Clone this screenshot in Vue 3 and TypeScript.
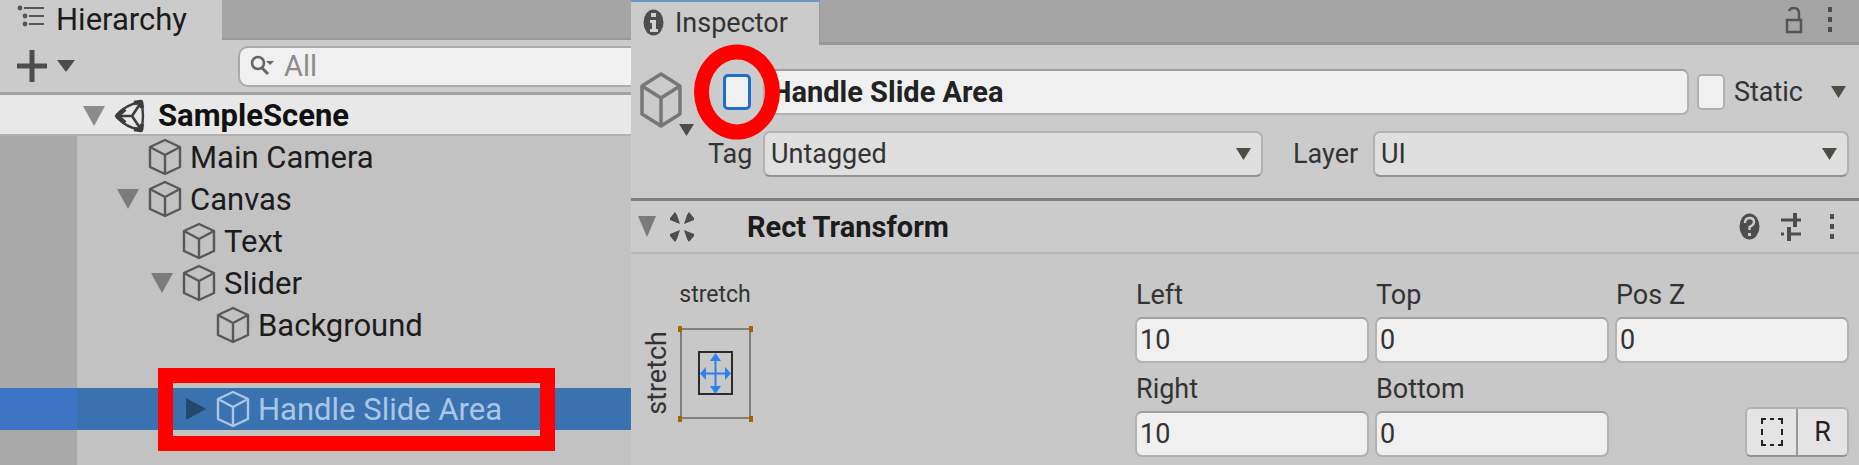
<script setup lang="ts">
import { ref } from 'vue'

interface TreeNode {
  name: string
  depth: number
  foldout?: 'open' | 'closed'
  selected?: boolean
  blank?: boolean
}

const nodes: TreeNode[] = [
  { name: 'Main Camera', depth: 1 },
  { name: 'Canvas', depth: 1, foldout: 'open' },
  { name: 'Text', depth: 2 },
  { name: 'Slider', depth: 2, foldout: 'open' },
  { name: 'Background', depth: 3 },
  { name: '', depth: 3, blank: true },
  { name: 'Handle Slide Area', depth: 3, foldout: 'closed', selected: true },
]

const search = ref('')
const objectName = ref('Handle Slide Area')
const active = ref(false)
const isStatic = ref(false)
const tag = ref('Untagged')
const layer = ref('UI')
const fields = ref([
  { id: 'left', label: 'Left', value: '10' },
  { id: 'top', label: 'Top', value: '0' },
  { id: 'posz', label: 'Pos Z', value: '0' },
  { id: 'right', label: 'Right', value: '10' },
  { id: 'bottom', label: 'Bottom', value: '0' },
])
</script>

<template>
  <main class="editor">
    <section class="hierarchy" aria-label="Hierarchy">
      <header class="tabbar">
        <h2 class="tab">
          <svg class="tab-icon" viewBox="0 0 28 24" aria-hidden="true">
            <g fill="none" stroke="#555" stroke-width="2">
              <path d="M7 4H27M12 12H27M12 20H27" />
            </g>
            <g fill="#555"><circle cx="3" cy="4" r="2.4" /><circle cx="8" cy="12" r="2.4" /><circle cx="8" cy="20" r="2.4" /></g>
          </svg>
          Hierarchy
        </h2>
      </header>

      <div class="toolbar">
        <button class="add" type="button" aria-label="Create">
          <svg width="30" height="32" viewBox="0 0 30 32"><path d="M15 0V32M0 16H30" stroke="#4d4d4d" stroke-width="5" /></svg>
          <svg width="18" height="12" viewBox="0 0 18 12"><path d="M0 0H18L9 12Z" fill="#4d4d45" /></svg>
        </button>
        <label class="search">
          <svg width="24" height="22" viewBox="0 0 24 22" aria-hidden="true">
            <circle cx="8" cy="8" r="6" fill="none" stroke="#666" stroke-width="2.6" />
            <path d="M12 13L18 19" stroke="#666" stroke-width="3" />
            <path d="M16 6H24L20 10Z" fill="#666" />
          </svg>
          <input v-model="search" type="text" placeholder="All" aria-label="Search" />
        </label>
      </div>

      <div class="scene">
        <svg class="fold" viewBox="0 0 24 24"><path d="M1 2H23L12 22Z" fill="#8c8c8c" /></svg>
        <svg class="scene-icon" viewBox="0 0 34 34" aria-hidden="true">
          <g fill="none" stroke="#3c3c3c" stroke-linejoin="round">
            <path d="M2 17Q12 5 27 3Q31 17 27 31Q12 29 2 17Z" stroke-width="2.400" />
            <path d="M3 17H18L26 5M18 17L26 29" stroke-width="2.600" />
            <path d="M3 17L11 10M3 17L11 24M20 4L27 3L28 9M20 30L27 31L28 25" stroke-width="4.500" />
          </g>
        </svg>
        <span>SampleScene</span>
      </div>

      <ul class="tree">
        <li
          v-for="node in nodes"
          :key="node.name"
          :class="['row', `depth-${node.depth}`, { selected: node.selected }]"
        >
          <span class="gutter"></span>
          <template v-if="!node.blank">
            <svg class="fold" viewBox="0 0 24 24" aria-hidden="true">
              <path v-if="node.foldout === 'open'" d="M1 2H23L12 22Z" fill="#7b7b7b" />
              <path v-if="node.foldout === 'closed'" d="M2 1L22 12L2 23Z" fill="#24476b" />
            </svg>
            <svg class="cube" viewBox="0 0 34 38" aria-hidden="true">
              <path d="M17 2L32 9V29L17 36L2 29V9ZM2 9L17 17L32 9M17 17V36" />
            </svg>
            <span>{{ node.name }}</span>
          </template>
          <span v-if="node.selected" class="mark-box"></span>
        </li>
      </ul>
    </section>

    <section class="inspector" aria-label="Inspector">
      <header class="tabbar">
        <h2 class="tab">
          <svg width="21" height="27" viewBox="0 0 21 27" aria-hidden="true">
            <ellipse cx="10.500" cy="13.500" rx="10" ry="13" fill="#4d4d4d" />
            <path d="M8 4H13V8H8ZM7 11H13V20H15V23H7V20H9V14H7Z" fill="#d0d0d0" />
          </svg>
          Inspector
        </h2>
        <div class="tab-tools">
          <button type="button" aria-label="Lock">
            <svg width="18" height="28" viewBox="0 0 18 28">
              <path d="M2 14H16V26H2Z" fill="none" stroke="#555" stroke-width="2.500" />
              <path d="M4 5Q5 2 9 2Q14 2 14 8V14" fill="none" stroke="#555" stroke-width="2.500" />
            </svg>
          </button>
          <button type="button" aria-label="Menu">
            <svg width="6" height="28" viewBox="0 0 6 28"><path d="M1 1H5V6H1ZM1 11H5V16H1ZM1 21H5V26H1Z" fill="#4d4d4d" /></svg>
          </button>
        </div>
      </header>

      <div class="object">
        <button class="object-icon" type="button" aria-label="Select icon">
          <svg width="42" height="56" viewBox="0 0 42 56">
            <path d="M21 2L40 14V42L21 54L2 42V14ZM2 14L21 26L40 14M21 26V54" fill="none" stroke="#777" stroke-width="3.500" stroke-linejoin="round" />
          </svg>
          <svg class="object-arrow" width="15" height="12" viewBox="0 0 15 12"><path d="M0 0H15L7.500 12Z" fill="#4d4d45" /></svg>
        </button>
        <div class="object-rows">
          <div class="object-row">
            <span class="active-cell">
              <input v-model="active" class="check focus" type="checkbox" aria-label="Active" />
              <span class="mark-ring"></span>
            </span>
            <input v-model="objectName" class="field name" type="text" aria-label="Name" />
            <label class="static"><input v-model="isStatic" class="check" type="checkbox" />Static</label>
            <button class="static-menu" type="button" aria-label="Static options">
              <svg width="15" height="12" viewBox="0 0 15 12"><path d="M0 0H15L7.500 12Z" fill="#4d4d45" /></svg>
            </button>
          </div>
          <div class="object-row">
            <label class="tag-label" for="tag">Tag</label>
            <span class="dropdown">
              <select id="tag" v-model="tag"><option>Untagged</option></select>
              <svg width="15" height="12" viewBox="0 0 15 12"><path d="M0 0H15L7.500 12Z" fill="#4d4d45" /></svg>
            </span>
            <label class="layer-label" for="layer">Layer</label>
            <span class="dropdown">
              <select id="layer" v-model="layer"><option>UI</option></select>
              <svg width="15" height="12" viewBox="0 0 15 12"><path d="M0 0H15L7.500 12Z" fill="#4d4d45" /></svg>
            </span>
          </div>
        </div>
      </div>

      <header class="component">
        <svg width="18" height="21" viewBox="0 0 18 21" aria-hidden="true"><path d="M0 0H18L9 21Z" fill="#7b7b7b" /></svg>
        <svg width="26" height="32" viewBox="0 0 26 32" aria-hidden="true">
          <path d="M1 7L6 1L8 4L11 13L1 9ZM25 7L20 1L18 4L15 13L25 9ZM1 25L6 31L8 28L11 19L1 23ZM25 25L20 31L18 28L15 19L25 23Z" fill="#4d4d4d" />
        </svg>
        <h3>Rect Transform</h3>
        <div class="component-tools">
          <button type="button" aria-label="Help">
            <svg width="21" height="27" viewBox="0 0 21 27">
              <ellipse cx="10.500" cy="13.500" rx="10" ry="13" fill="#4d4d4d" />
              <path d="M6 10Q6 5 10.500 5Q15 5 15 9Q15 12 10.500 14V17" fill="none" stroke="#ccc" stroke-width="2.400" />
              <path d="M9 20H12V23H9Z" fill="#ccc" />
            </svg>
          </button>
          <button type="button" aria-label="Presets">
            <svg width="22" height="28" viewBox="0 0 22 28">
              <path d="M1 7H13M13 7H21M1 21H4M9 21H21" stroke="#4d4d4d" stroke-width="3" />
              <path d="M15 0V14M9 14V28" stroke="#4d4d4d" stroke-width="4" />
            </svg>
          </button>
          <button type="button" aria-label="Component menu">
            <svg width="6" height="28" viewBox="0 0 6 28"><path d="M1 1H5V6H1ZM1 11H5V16H1ZM1 21H5V26H1Z" fill="#4d4d4d" /></svg>
          </button>
        </div>
      </header>

      <div class="transform">
        <div class="anchors">
          <span class="anchor-x">stretch</span>
          <span class="anchor-y">stretch</span>
          <button type="button" aria-label="Anchor presets">
            <svg width="76" height="98" viewBox="0 0 76 98">
              <path d="M4 5H73V94H4Z" fill="none" stroke="#808080" stroke-width="2" />
              <path d="M22 28H55V70H22Z" fill="none" stroke="#2b2b2b" stroke-width="2" />
              <path d="M38.500 33V66M28 49.500H49" stroke="#2f80ed" stroke-width="2" />
              <path d="M38.500 29L44 37H33ZM38.500 70L44 62H33ZM23 49.500L29 43V56ZM54 49.500L48 43V56Z" fill="#2f80ed" />
              <path d="M1 2H5V8H1ZM72 2H76V8H72ZM1 92H5V98H1ZM72 92H76V98H72Z" fill="#a66300" />
            </svg>
          </button>
        </div>
        <div class="fields">
          <div v-for="f in fields" :key="f.id" class="cell">
            <label :for="f.id">{{ f.label }}</label>
            <input :id="f.id" v-model="f.value" class="field" type="text" />
          </div>
          <div class="modes">
            <button type="button" aria-label="Blueprint mode">
              <svg width="22" height="28" viewBox="0 0 22 28">
                <path d="M1 6V1H5M9 1H13M17 1H21V6M21 11V17M21 22V27H17M13 27H9M5 27H1V22M1 17V11" fill="none" stroke="#222" stroke-width="2" />
              </svg>
            </button>
            <button type="button" aria-label="Raw edit mode">R</button>
          </div>
        </div>
      </div>
    </section>
  </main>
</template>

<style>
body {
  margin: 0;
  background: #c8c8c8;
}
</style>

<style scoped>
* {
  box-sizing: border-box;
}

.editor {
  display: grid;
  grid-template-columns: 631fr 1228fr;
  min-height: 100vh;
  color: #1c1c1c;
}

button {
  display: flex;
  align-items: center;
  padding: 0;
  border: 0;
  background: none;
  color: inherit;
  font: inherit;
}

svg {
  display: block;
  flex: none;
}

h2,
h3 {
  margin: 0;
}

/* Hierarchy */
.hierarchy {
  display: flex;
  flex-direction: column;
  min-width: 0;
  overflow: hidden;
  background: #c2c2c2;
  font: 31px/40px Roboto, "Liberation Sans", sans-serif;
}

.tabbar {
  display: flex;
  background: #a5a5a5;
}

.hierarchy .tabbar {
  height: 40px;
  box-shadow: inset 0 -2px #999;
}

.tab {
  display: flex;
  align-items: center;
  background: #cbcbcb;
  font: inherit;
}

.hierarchy .tab {
  width: 222px;
  padding-left: 17px;
  gap: 11px;
}

.tab-icon {
  width: 28px;
  height: 24px;
  margin-bottom: 8px;
}

.toolbar {
  display: flex;
  align-items: center;
  height: 55px;
  padding-left: 17px;
  border-bottom: 3px solid #a2a2a2;
  background: #cbcbcb;
}

.add {
  gap: 10px;
}

.search {
  display: flex;
  flex: 1;
  align-items: center;
  gap: 10px;
  height: 41px;
  margin-left: 163px;
  padding-left: 10px;
  border: 2px solid #aaa;
  border-right: 0;
  border-radius: 10px 0 0 10px;
  background: #f0f0f0;
}

.search input {
  flex: 1;
  min-width: 0;
  padding: 0;
  border: 0;
  outline: 0;
  background: none;
  font: inherit;
  font-size: 29px;
}

.search input::placeholder {
  color: #8c8c8c;
  opacity: 1;
}

.scene {
  display: flex;
  align-items: center;
  gap: 8px;
  height: 41px;
  padding: 2px 0 0 82px;
  border-bottom: 2px solid #b0b0b0;
  background: #e8e8e8;
  color: #111;
  font-weight: 700;
}

.scene span {
  padding-left: 2px;
}

.fold {
  width: 24px;
  height: 24px;
}

.scene-icon {
  width: 34px;
  height: 34px;
}

.tree {
  flex: 1;
  margin: 0;
  padding: 0;
  background: linear-gradient(to right, #a9a9a9 77px, #c2c2c2 77px);
  list-style: none;
}

.row {
  position: relative;
  display: flex;
  align-items: center;
  gap: 8px;
  height: 42px;
}

.row > span {
  padding-top: 2px;
}

.gutter {
  align-self: stretch;
  width: 77px;
}

.depth-1 .gutter {
  margin-right: 31px;
}

.depth-2 .gutter {
  margin-right: 65px;
}

.depth-3 .gutter {
  margin-right: 99px;
}

.cube {
  width: 34px;
  height: 38px;
  fill: none;
  stroke: #585858;
  stroke-width: 2.4;
  stroke-linejoin: round;
}

.selected {
  background: #3a72b0;
  color: #a9c6e6;
}

.selected .gutter {
  background: #3e74c4;
}

.selected .cube {
  stroke: #a9c6e6;
}

.mark-box {
  position: absolute;
  top: -20px;
  left: 158px;
  width: 397px;
  height: 83px;
  border: 15px solid #f00;
}

/* Inspector */
.inspector {
  display: flex;
  flex-direction: column;
  min-width: 0;
  background: #c8c8c8;
  color: #333;
  font: 27px/40px Roboto, "Liberation Sans", sans-serif;
}

.inspector .tabbar {
  justify-content: space-between;
  height: 45px;
  box-shadow: inset 0 -3px #999;
}

.inspector .tab {
  width: 189px;
  padding: 0 0 2px 12px;
  gap: 11px;
  border-top: 2px solid #6f97c8;
  border-right: 1px solid #999;
}

.tab-tools {
  display: flex;
  gap: 24px;
  padding: 0 26px 6px 0;
}

.object {
  display: flex;
  padding: 24px 10px 22px 9px;
  border-bottom: 3px solid #808080;
  background: #cbcbcb;
}

.object-icon {
  position: relative;
  align-self: flex-start;
  width: 54px;
  padding-top: 3px;
}

.object-arrow {
  position: absolute;
  right: 0;
  bottom: -8px;
}

.object-rows {
  display: flex;
  flex: 1;
  flex-direction: column;
  gap: 17px;
}

.object-row {
  display: flex;
  align-items: center;
  height: 45px;
}

.active-cell {
  position: relative;
  display: flex;
  justify-content: center;
  width: 86px;
}

.mark-ring {
  position: absolute;
  top: 50%;
  left: 50%;
  width: 86px;
  height: 95px;
  border: 15px solid #f00;
  border-radius: 50%;
  transform: translate(-50%, -50%);
  pointer-events: none;
}

.check {
  width: 28px;
  height: 36px;
  margin: 0;
  border: 2px solid #b0b0b0;
  border-radius: 5px;
  background: #f0f0f0;
  appearance: none;
}

.check:checked {
  background: #3a72b0;
}

.focus {
  border: 3px solid #1d6fcb;
}

.field {
  min-width: 0;
  width: 100%;
  height: 46px;
  padding: 0 3px;
  border: 2px solid #b2b2b2;
  border-top-color: #a0a0a0;
  border-radius: 7px;
  outline: 0;
  background: #f0f0f0;
  color: #333;
  font: inherit;
}

.name {
  flex: 1;
  margin-left: -17px;
  padding-left: 6px;
  color: #222;
  font-size: 29px;
  font-weight: 700;
}

.static {
  display: flex;
  align-items: center;
  gap: 9px;
  margin-left: 8px;
}

.static-menu {
  margin: 0 3px 0 28px;
}

.tag-label {
  width: 69px;
  padding-left: 14px;
}

.layer-label {
  width: 110px;
  padding-left: 30px;
}

.dropdown {
  position: relative;
  flex: 500;
}

.layer-label + .dropdown {
  flex: 476;
}

.dropdown select {
  display: block;
  width: 100%;
  height: 46px;
  padding: 0 30px 0 6px;
  border: 2px solid #b2b2b2;
  border-bottom-color: #929292;
  border-radius: 7px;
  background: #dfdfdf;
  color: #333;
  font: inherit;
  appearance: none;
}

.dropdown svg {
  position: absolute;
  top: 17px;
  right: 12px;
  pointer-events: none;
}

.component {
  display: flex;
  align-items: center;
  height: 53px;
  padding: 0 18px 0 7px;
  border-bottom: 2px solid #b8b8b8;
  background: #cbcbcb;
}

.component > svg + svg {
  margin-left: 13px;
}

.component h3 {
  flex: 1;
  margin-left: 52px;
  color: #1c1c1c;
  font: inherit;
  font-size: 29px;
  font-weight: 700;
}

.component-tools {
  display: flex;
  gap: 20px;
  padding-right: 6px;
}

.component-tools button:last-child {
  margin-left: 7px;
}

.transform {
  display: grid;
  grid-template-columns: 504fr 714fr;
  padding: 21px 10px 8px 0;
}

.anchors {
  display: grid;
  grid-template-columns: 28px 76px;
  grid-template-rows: 40px 98px;
  column-gap: 6px;
  row-gap: 9px;
  align-content: start;
  padding-left: 12px;
}

.anchor-x {
  grid-column: 2;
  font-size: 23px;
  text-align: center;
}

.anchor-y {
  justify-self: center;
  align-self: center;
  line-height: 28px;
  writing-mode: vertical-rl;
  rotate: 180deg;
}

.fields {
  display: grid;
  grid-template-columns: repeat(3, minmax(0, 1fr));
  column-gap: 6px;
  row-gap: 6px;
}

.cell {
  display: flex;
  flex-direction: column;
  gap: 2px;
}

.cell label {
  padding-left: 1px;
}

.modes {
  display: flex;
  align-self: end;
  justify-self: end;
  width: 104px;
  height: 50px;
  border: 2px solid #b2b2b2;
  border-bottom-color: #929292;
  border-radius: 6px;
  background: #e4e4e4;
  color: #222;
}

.modes button {
  flex: 1;
  justify-content: center;
}

.modes button + button {
  border-left: 2px solid #999;
}
</style>
